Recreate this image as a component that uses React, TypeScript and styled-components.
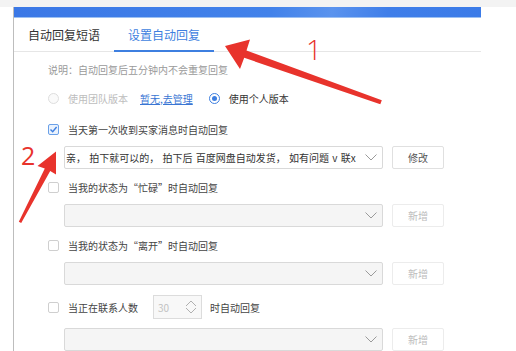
import React from "react";
import styled, { createGlobalStyle } from "styled-components";

const GlobalStyle = createGlobalStyle`
  html, body { margin: 0; padding: 0; background: #ffffff; }
  body { font-family: "Noto Sans CJK SC", "Noto Sans", sans-serif; }
  * { box-sizing: border-box; }
`;

const Page = styled.div`
  position: relative;
  width: 516px;
  height: 351px;
  overflow: hidden;
  background: #fff;
`;

const TopStrip = styled.div`
  height: 7px;
  background: #f3f3f3;
`;

const Panel = styled.div`
  margin-left: 13px;
  width: 468px;
  height: 344px;
  border-left: 1px solid #bdbdbd;
  display: flex;
  flex-direction: column;
`;

const TitleBar = styled.div`
  height: 12px;
  background: linear-gradient(100deg, #3b78e6 0%, #4282ea 55%, #5a93ee 68%, #3f7ee9 80%, #3b7be8 100%);
  border-bottom: 1px solid #9cc0f2;
`;

const Tabs = styled.div`
  display: flex;
  height: 36px;
  border-bottom: 1px solid #e6e6e6;
`;

const Tab = styled.div<{ $active?: boolean }>`
  display: flex;
  align-items: center;
  padding: 0 14px;
  font-size: 12px;
  color: ${(p) => (p.$active ? "#3e7fe0" : "#333")};
  border-bottom: 2px solid ${(p) => (p.$active ? "#3e7fe0" : "transparent")};
  margin-bottom: -1px;
`;

const Content = styled.div`
  padding-left: 34px;
  display: flex;
  flex-direction: column;
`;

const Notice = styled.div`
  margin-top: 11px;
  font-size: 10px;
  line-height: 14px;
  color: #9a9a9a;
`;

const RadioRow = styled.div`
  margin-top: 11px;
  height: 20px;
  display: flex;
  align-items: center;
  font-size: 10px;
`;

const Radio = styled.span<{ $checked?: boolean }>`
  width: 11px;
  height: 11px;
  border-radius: 50%;
  border: 1px solid ${(p) => (p.$checked ? "#3e7fe0" : "#dedede")};
  background: ${(p) => (p.$checked ? "#fff" : "#fafafa")};
  display: flex;
  align-items: center;
  justify-content: center;
  flex: none;
  &::after {
    content: "";
    width: 5px;
    height: 5px;
    border-radius: 50%;
    background: ${(p) => (p.$checked ? "#3e7fe0" : "transparent")};
  }
`;

const RadioText = styled.span<{ $disabled?: boolean }>`
  margin-left: 9px;
  color: ${(p) => (p.$disabled ? "#bdbdbd" : "#333")};
`;

const Link = styled.a`
  margin-left: 12px;
  margin-right: 16px;
  color: #3a76d4;
  text-decoration: underline;
`;

const Sections = styled.div`
  margin-top: 11px;
  display: flex;
  flex-direction: column;
  gap: 8px;
`;

const Section = styled.div<{ $gap: number }>`
  display: flex;
  flex-direction: column;
  gap: ${(p) => p.$gap}px;
`;

const CheckRow = styled.div<{ $tall?: boolean }>`
  height: ${(p) => (p.$tall ? 24 : 20)}px;
  margin-top: ${(p) => (p.$tall ? 2 : 0)}px;
  display: flex;
  align-items: center;
  font-size: 10px;
  color: #444;
`;

const Box = styled.span<{ $checked?: boolean }>`
  width: 11px;
  height: 11px;
  border-radius: 2px;
  border: 1px solid ${(p) => (p.$checked ? "#6aa0e8" : "#cfcfcf")};
  background: ${(p) => (p.$checked ? "#eaf2fd" : "#fff")};
  display: flex;
  align-items: center;
  justify-content: center;
  flex: none;
  margin-right: 9px;
`;

const Inline = styled.span``;

const NumberBox = styled.div`
  margin-left: 15px;
  margin-right: 8px;
  width: 49px;
  height: 24px;
  border: 1px solid #dcdcdc;
  background: #f8f8f8;
  display: flex;
  align-items: center;
  justify-content: space-between;
  padding: 0 4px 0 4px;
  color: #c2c2c2;
  font-size: 10px;
`;

const SelectRow = styled.div`
  display: flex;
  padding-left: 16px;
`;

const Select = styled.div<{ $disabled?: boolean }>`
  width: 319px;
  height: 23px;
  border: 1px solid #d9d9d9;
  border-radius: 2px;
  background: ${(p) => (p.$disabled ? "#f5f5f5" : "#fff")};
  display: flex;
  align-items: center;
  padding: 0 5px 0 1px;
  font-size: 10px;
  color: #333;
`;

const SelectText = styled.span`
  flex: 1;
  white-space: nowrap;
  word-spacing: 1px;
`;

const Button = styled.div<{ $disabled?: boolean }>`
  margin-left: 9px;
  width: 52px;
  height: 23px;
  border: 1px solid ${(p) => (p.$disabled ? "#ececec" : "#e0e0e0")};
  border-radius: 2px;
  background: #fff;
  display: flex;
  align-items: center;
  justify-content: center;
  font-size: 10px;
  color: ${(p) => (p.$disabled ? "#bcbcbc" : "#555")};
`;

const Overlay = styled.svg`
  position: absolute;
  left: 0;
  top: 0;
  pointer-events: none;
`;

const Mark = styled.span<{ $size: number; $weight: number }>`
  position: absolute;
  font-family: "Open Sans", "Liberation Sans", sans-serif;
  font-size: ${(p) => p.$size}px;
  font-weight: ${(p) => p.$weight};
  line-height: 1;
  color: #e8332c;
`;

const Chevron = () => (
  <svg width="12" height="7" viewBox="0 0 12 7">
    <polyline points="0.5,0.5 6,6 11.5,0.5" fill="none" stroke="#9a9a9a" strokeWidth="1" />
  </svg>
);

const Check = () => (
  <svg width="9" height="9" viewBox="0 0 9 9">
    <polyline points="1.5,4.5 3.7,6.8 7.6,2" fill="none" stroke="#3e7fe0" strokeWidth="1.4" />
  </svg>
);

const Spinner = () => (
  <svg width="12" height="16" viewBox="0 0 12 16">
    <polyline points="1,7 6,2 11,7" fill="none" stroke="#b0b0b0" strokeWidth="1" />
    <polyline points="1,9 6,14 11,9" fill="none" stroke="#b0b0b0" strokeWidth="1" />
  </svg>
);

type Item = {
  label: React.ReactNode;
  checked?: boolean;
  text?: string;
  button: string;
  tall?: boolean;
};

const items: Item[] = [
  {
    label: "当天第一次收到买家消息时自动回复",
    checked: true,
    text: "亲， 拍下就可以的， 拍下后 百度网盘自动发货， 如有问题 v 联x",
    button: "修改",
  },
  { label: "当我的状态为“忙碌”时自动回复", button: "新增" },
  { label: "当我的状态为“离开”时自动回复", button: "新增" },
  {
    label: (
      <>
        <Inline>当正在联系人数</Inline>
        <NumberBox>
          <span>30</span>
          <Spinner />
        </NumberBox>
        <Inline>时自动回复</Inline>
      </>
    ),
    button: "新增",
    tall: true,
  },
];

export default function App() {
  return (
    <>
      <GlobalStyle />
      <Page>
        <TopStrip />
        <Panel>
          <TitleBar />
          <Tabs>
            <Tab>自动回复短语</Tab>
            <Tab $active>设置自动回复</Tab>
          </Tabs>
          <Content>
            <Notice>说明：自动回复后五分钟内不会重复回复</Notice>
            <RadioRow>
              <Radio />
              <RadioText $disabled>使用团队版本</RadioText>
              <Link>暂无,去管理</Link>
              <Radio $checked />
              <RadioText>使用个人版本</RadioText>
            </RadioRow>
            <Sections>
              {items.map((it, i) => (
                <Section key={i} $gap={it.tall ? 9 : 7}>
                  <CheckRow $tall={it.tall}>
                    <Box $checked={it.checked}>{it.checked && <Check />}</Box>
                    {it.label}
                  </CheckRow>
                  <SelectRow>
                    <Select $disabled={!it.text}>
                      <SelectText>{it.text ?? ""}</SelectText>
                      <Chevron />
                    </Select>
                    <Button $disabled={!it.text}>{it.button}</Button>
                  </SelectRow>
                </Section>
              ))}
            </Sections>
          </Content>
        </Panel>
        <Overlay width="516" height="351" viewBox="0 0 516 351">
          <polygon
            points="225,46 250,39.5 246.5,50.5 381.8,100.3 380.3,104.2 244.2,57.8 240,69"
            fill="#e8332c"
          />
          <polygon
            points="56,151.5 56,174.5 50.2,171 21.2,223 18.8,221.8 44.8,168.5 37.5,166"
            fill="#e8332c"
          />
        </Overlay>
        <Mark $size={28} $weight={300} style={{ left: 306, top: 35 }}>
          1
        </Mark>
        <Mark $size={25} $weight={400} style={{ left: 21, top: 143 }}>
          2
        </Mark>
      </Page>
    </>
  );
}
